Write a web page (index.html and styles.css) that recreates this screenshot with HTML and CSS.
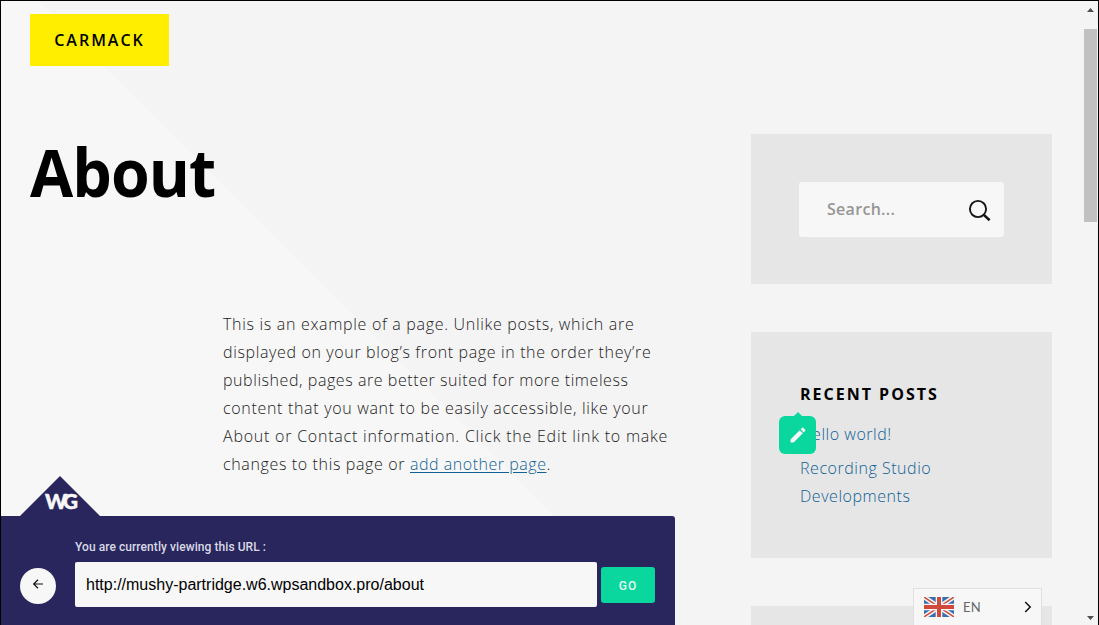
FILE: index.html
```html
<!DOCTYPE html>
<html lang="en">
<head>
<meta charset="utf-8">
<title>About – Carmack</title>
<link rel="stylesheet" href="styles.css">
</head>
<body>
<div class="window">
  <div class="page">
    <main class="main">
      <a class="brand">CARMACK</a>
      <h1 class="title">About</h1>
      <p class="copy">
        <span class="line l1">This is an example of a page. Unlike posts, which are</span>
        <span class="line l2">displayed on your blog’s front page in the order they’re</span>
        <span class="line l3">published, pages are better suited for more timeless</span>
        <span class="line l4">content that you want to be easily accessible, like your</span>
        <span class="line l5">About or Contact information. Click the Edit link to make</span>
        <span class="line l6">changes to this page or <a class="link">add another page</a>.</span>
      </p>
    </main>
    <aside class="sidebar">
      <section class="widget widget-search">
        <div class="search">
          <span class="placeholder">Search...</span>
          <svg class="search-icon" width="24" height="24" viewBox="0 0 24 24" fill="none" stroke="#151515"><circle cx="10" cy="10" r="8.1" stroke-width="1.9"/><path d="M15.600 15.600L21.600 21.200" stroke-width="2.600"/></svg>
        </div>
      </section>
      <section class="widget widget-posts">
        <h2 class="widget-title">RECENT POSTS</h2>
        <ul class="posts">
          <li class="post first">Hello world!
            <span class="edit">
              <svg width="20" height="20" viewBox="0 0 24 24" fill="#f7f7f7"><path d="M3 17.250V21h3.750L17.810 9.940l-3.750-3.750L3 17.250zM20.710 7.040a1 1 0 0 0 0-1.410l-2.340-2.340a1 1 0 0 0-1.410 0l-1.830 1.830 3.750 3.750 1.830-1.830z"/></svg>
            </span>
          </li>
          <li class="post second">Recording Studio<br>Developments</li>
        </ul>
      </section>
      <section class="widget widget-next"></section>
    </aside>
    <div class="scrollbar">
      <svg class="arrow" width="14" height="28" viewBox="0 0 14 28"><path d="M3 11h7L6.500 7z" fill="#505050"/></svg>
      <div class="thumb"></div>
      <svg class="arrow down" width="14" height="20" viewBox="0 0 14 20"><path d="M3 11h7L6.500 15z" fill="#505050"/></svg>
    </div>
  </div>

  <div class="urlbar">
    <div class="logo"><span class="logo-text">WG</span></div>
    <div class="back"><svg width="14" height="12" viewBox="0 0 14 12" fill="none" stroke="#111" stroke-width="1.200"><path d="M12 6H3M7 1.800L2.700 6L7 10.200"/></svg></div>
    <div class="form">
      <label class="label">You are currently viewing this URL :</label>
      <div class="row">
        <div class="field"><span class="url">http://mushy-partridge.w6.wpsandbox.pro/about</span></div>
        <button class="go">GO</button>
      </div>
    </div>
  </div>

  <div class="lang">
    <svg width="30" height="20" viewBox="0 0 30 20"><path fill="#3a6fae" d="M0 0h30v20H0z"/><path d="M0 0L30 20M30 0L0 20" stroke="#f7f7f7" stroke-width="4.600"/><path d="M0 0L30 20M30 0L0 20" stroke="#d0503f" stroke-width="1.500"/><path d="M15 0v20M0 10h30" stroke="#f7f7f7" stroke-width="6.600"/><path d="M15 0v20M0 10h30" stroke="#d0493a" stroke-width="4"/></svg>
    <span class="code">EN</span>
    <svg class="chevron" width="8" height="12" viewBox="0 0 8 12" fill="none" stroke="#111" stroke-width="1.500"><path d="M1.200 1L6.200 6L1.200 11"/></svg>
  </div>
</div>
</body>
</html>
```
FILE: styles.css
```css
* { box-sizing: border-box; }
body { margin: 0; font-family: "Open Sans", "Noto Sans", sans-serif; }
.window {
  position: relative;
  width: 1099px;
  height: 625px;
  overflow: hidden;
  border: 1px solid #000;
  border-bottom: 0;
  background: #f7f7f7 linear-gradient(to top right, #f7f7f7 50%, #f5f4f5 50%) 37px -1px / 1100px 1100px no-repeat;
}
.page { display: flex; height: 624px; }
.main { width: 750px; padding: 13px 0 0 29px; }
.brand {
  display: flex;
  align-items: center;
  justify-content: center;
  width: 139px;
  height: 52px;
  background: #ffee00;
  color: #000;
  font-size: 16px;
  font-weight: 600;
  letter-spacing: 2px;
}
.title {
  margin: 64px 0 0;
  height: 82px;
  font-size: 67px;
  line-height: 82px;
  font-weight: 700;
  color: #000;
  letter-spacing: -1px;
  transform: scaleX(.935);
  transform-origin: left;
}
.copy { margin: 98px 0 0 193px; font-size: 16px; font-weight: 300; color: #222; }
.line { display: block; height: 28px; line-height: 28px; white-space: nowrap; }
.l1 { letter-spacing: .69px; }
.l2 { letter-spacing: .64px; }
.l3 { letter-spacing: .57px; }
.l4 { letter-spacing: .68px; }
.l5 { letter-spacing: .77px; }
.l6 { letter-spacing: .64px; }
.link { color: #0f6296; text-decoration: underline; text-underline-offset: 2px; letter-spacing: .53px; }
.sidebar { display: flex; flex-direction: column; gap: 48px; width: 301px; padding-top: 133px; }
.widget { flex: none; background: #e6e6e6; }
.widget-search { height: 150px; padding: 48px; }
.search {
  display: flex;
  align-items: center;
  justify-content: space-between;
  width: 205px;
  height: 55px;
  padding: 0 12px 0 28px;
  border-radius: 3px;
  background: #f7f7f7;
}
.search-icon { margin-top: 2px; }
.placeholder { margin-top: -2px; color: #969696; font-size: 16px; font-weight: 600; letter-spacing: .3px; }
.widget-posts { height: 226px; padding: 48px 49px; }
.widget-title { margin: 0; font-size: 16px; line-height: 28px; font-weight: 700; letter-spacing: 2px; color: #000; white-space: nowrap; }
.posts { margin: 12px 0 0; padding: 0; list-style: none; }
.post { position: relative; margin-bottom: 6px; font-size: 16px; line-height: 28px; font-weight: 300; letter-spacing: .54px; color: #0f5f94; }
.edit {
  position: absolute;
  left: -21px;
  top: -4px;
  display: flex;
  align-items: center;
  justify-content: center;
  width: 37px;
  height: 38px;
  border-radius: 6px;
  background: #0ad79e;
}
.edit::before { content: ""; position: absolute; left: 15px; top: -4px; border: 4px solid transparent; border-top: 0; border-bottom-color: #0ad79e; }
.widget-next { height: 60px; }
.scrollbar { display: flex; flex-direction: column; width: 15px; margin-left: 32px; margin-right: -1px; }
.arrow { flex: none; }
.thumb { flex: none; width: 13px; height: 193px; background: #c1c1c1; }
.down { margin-top: auto; }
.urlbar {
  position: absolute;
  left: 0;
  bottom: 0;
  display: flex;
  width: 674px;
  height: 109px;
  padding: 21px 0 0 19px;
  border-radius: 0 3px 0 0;
  background: #28265d;
}
.logo {
  position: absolute;
  left: 19px;
  top: -40px;
  width: 80px;
  height: 40px;
  background: #28265d;
  clip-path: polygon(50% 0, 100% 100%, 0 100%);
}
.logo-text { position: absolute; left: 25px; top: 11px; font: 900 21px/27px Lato, sans-serif; letter-spacing: -4px; color: #f7f7f7; -webkit-text-stroke: .5px #f7f7f7; }
.back {
  display: flex;
  align-items: center;
  justify-content: center;
  width: 36px;
  height: 36px;
  margin-top: 31px;
  border-radius: 50%;
  background: #f7f7f7;
}
.back svg { margin-top: -4px; }
.form { margin-left: 19px; }
.label { display: block; height: 25px; font: 500 12px/20px Roboto, sans-serif; letter-spacing: .07px; color: #d9d9e6; }
.row { display: flex; align-items: center; gap: 4px; }
.field { display: flex; align-items: center; width: 522px; height: 45px; padding-left: 11px; border-radius: 2px; background: #f7f7f7; }
.url { font: 16px "Liberation Sans", Arial, sans-serif; color: #000; }
.go { width: 54px; height: 36px; padding: 2px 0 0; margin-top: 1px; border: 0; border-radius: 3px; background: #0ad79e; color: #e6faf3; font: 500 12px Roboto, sans-serif; letter-spacing: 1px; }
.lang {
  position: absolute;
  left: 912px;
  top: 587px;
  display: flex;
  align-items: center;
  width: 129px;
  height: 38px;
  padding: 0 9px 2px 10px;
  border: 1px solid #e4dee3;
  border-bottom: 0;
  background: #f7f7f7;
}
.code { margin-left: 9px; font: 13px Lato, sans-serif; letter-spacing: .2px; color: #666; }
.chevron { margin-left: auto; }
```
